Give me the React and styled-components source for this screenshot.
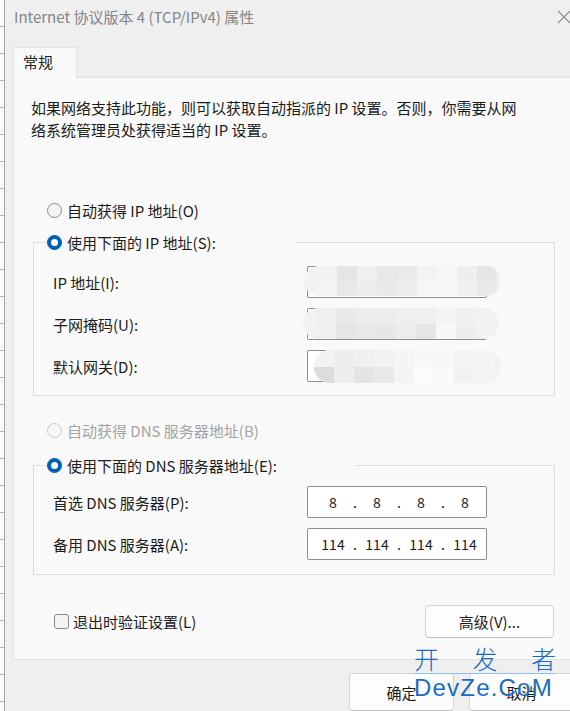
import React from "react";
import styled, { createGlobalStyle } from "styled-components";

const GlobalStyle = createGlobalStyle`
  html, body {
    margin: 0;
    padding: 0;
    background: #efefef;
  }
  body {
    font-family: "Noto Sans CJK SC", "Noto Sans", sans-serif;
    color: #1b1b1b;
  }
`;

const Screen = styled.div`
  position: relative;
  width: 570px;
  height: 711px;
  overflow: hidden;
  display: flex;
  background: #efefef;
`;

const BackWindow = styled.div`
  width: 4px;
  flex-shrink: 0;
  background: repeating-linear-gradient(
    to bottom,
    #fafafa 0 26px,
    #b8b8b8 26px 27px
  );
`;

const Dialog = styled.div`
  width: 582px;
  flex-shrink: 0;
  display: flex;
  flex-direction: column;
  border-left: 1px solid #a7a7a7;
  background: #efefef;
`;

const TitleBar = styled.div`
  height: 47px;
  display: flex;
  align-items: flex-start;
  padding-left: 9px;
`;

const Title = styled.div`
  margin-top: 8px;
  font-size: 15px;
  line-height: 18px;
  color: #858585;
`;

const CloseButton = styled.div`
  margin-left: auto;
  width: 46px;
  height: 34px;
  display: flex;
  align-items: center;
  justify-content: center;
`;

const Body = styled.div`
  padding: 0 11px 0 8px;
`;

const TabStrip = styled.div`
  display: flex;
`;

const Tab = styled.div`
  position: relative;
  z-index: 1;
  width: 64px;
  height: 31px;
  box-sizing: border-box;
  margin-bottom: -1px;
  padding-left: 9px;
  border: 1px solid #e2e2e2;
  border-bottom: none;
  background: #f9f9f9;
  font-size: 15px;
  line-height: 28px;
`;

const Panel = styled.div`
  display: flex;
  flex-direction: column;
  padding-bottom: 21px;
  border: 1px solid #e2e2e2;
  background: #f9f9f9;
`;

const Intro = styled.p`
  margin: 19px 0 0 17px;
  font-size: 15px;
  line-height: 22px;
`;

const RadioRow = styled.label`
  display: flex;
  align-items: center;
  height: 20px;
  margin: ${({ $mt }) => $mt}px 0 0 33px;
  font-size: 15px;
  color: ${({ disabled }) => (disabled ? "#a3a3a3" : "#1b1b1b")};
  white-space: nowrap;
`;

const RadioDot = styled.span`
  position: relative;
  width: 15px;
  height: 15px;
  box-sizing: border-box;
  margin-right: 5px;
  border-radius: 50%;
  flex-shrink: 0;
  border: 1px solid
    ${({ $checked, $disabled }) =>
      $checked ? "#005fb8" : $disabled ? "#c9c9c9" : "#8a8a8a"};
  background: ${({ $checked, $disabled }) =>
    $checked ? "#005fb8" : $disabled ? "#f7f7f7" : "#f4f4f4"};

  &::after {
    content: "";
    display: ${({ $checked }) => ($checked ? "block" : "none")};
    position: absolute;
    left: 50%;
    top: 50%;
    width: 7px;
    height: 7px;
    margin: -3.5px 0 0 -3.5px;
    border-radius: 50%;
    background: #fff;
  }
`;

const GroupBox = styled.fieldset`
  margin: ${({ $mt }) => $mt}px 20px 0 19px;
  padding: ${({ $pt }) => $pt}px 0 ${({ $pb }) => $pb}px 19px;
  border: 1px solid #dddddd;
  min-width: 0;
`;

const Legend = styled.legend`
  width: ${({ $w }) => $w}px;
  margin-left: -6px;
  padding: 0;
  background: #f9f9f9;
`;

const LegendRadio = styled(RadioRow)`
  margin: 0;
`;

const FieldGrid = styled.div`
  display: grid;
  grid-template-columns: 254px 180px;
  row-gap: 10px;
  align-items: center;
`;

const FieldLabel = styled.span`
  font-size: 15px;
`;

const TextBox = styled.div`
  position: relative;
  height: 32px;
  box-sizing: border-box;
  padding-left: 7px;
  display: flex;
  align-items: center;
  border: 1px solid #8d8d8d;
  border-radius: 2px;
  background: #fff;
  font-size: 14px;
`;

const Segment = styled.span`
  width: 36px;
  text-align: center;
`;

const Dot = styled.span`
  width: 8px;
  text-align: center;
`;

const Mosaic = styled.div`
  position: absolute;
  left: ${({ $x }) => $x}px;
  top: -1px;
  width: ${({ $w }) => $w}px;
  height: ${({ $h }) => $h}px;
  box-sizing: border-box;
  padding-left: ${({ $pad }) => $pad}px;
  display: grid;
  grid-template-columns: repeat(9, 20px);
  grid-template-rows: 1fr 1fr;
  border-radius: 16px;
  background: #f2f2f2;
  overflow: hidden;
`;

const Cell = styled.span`
  background: ${({ $c }) => $c};
`;

const BottomRow = styled.div`
  display: flex;
  align-items: center;
  justify-content: space-between;
  margin: 30px 21px 0 40px;
`;

const CheckRow = styled.label`
  display: flex;
  align-items: center;
  font-size: 15px;
`;

const CheckBox = styled.span`
  width: 15px;
  height: 15px;
  box-sizing: border-box;
  margin-right: 4px;
  border: 1px solid #8a8a8a;
  border-radius: 3px;
  background: #f4f4f4;
`;

const Button = styled.button`
  width: ${({ $w }) => $w}px;
  height: ${({ $h }) => $h}px;
  padding: 0;
  border: 1px solid #d4d4d4;
  border-bottom-color: #c2c2c2;
  border-radius: 4px;
  background: #fdfdfd;
  font-family: inherit;
  font-size: 15px;
  color: #1b1b1b;
`;

const Footer = styled.div`
  display: flex;
  justify-content: flex-end;
  gap: 15px;
  padding: 13px 2px 0 0;
`;

const Watermark = styled.div`
  position: absolute;
  left: 414px;
  top: 643px;
  width: 142px;
  display: flex;
  flex-direction: column;
  color: #1a6cc2;
  font-family: "Liberation Sans", "Noto Sans CJK SC", sans-serif;
`;

const WmTop = styled.div`
  display: flex;
  justify-content: space-between;
  font-family: "Noto Sans CJK SC", sans-serif;
  font-size: 25px;
  font-weight: 300;
  line-height: 30px;
  border-bottom: 1px solid #8cc3ee;
`;

const WmBottom = styled.div`
  font-size: 24px;
  line-height: 28px;
  letter-spacing: 1.2px;
`;

const blobs = [
  {
    x: -4, w: 197, h: 30, pad: 13,
    cells: [
      "#f2f2f2", "#e5e5e5", "#efefef", "#e8e8e8", "#eaeaea", "#f3f3f3", "#f6f6f6", "#eeeeee", "#e6e6e6",
      "#f3f3f3", "#e8e8e8", "#ededed", "#e9e9e9", "#ececec", "#f6f6f6", "#f7f7f7", "#f0f0f0", "#e9e9e9",
    ],
  },
  {
    x: -5, w: 196, h: 31, pad: 13,
    cells: [
      "#efefef", "#e9e9e9", "#ededed", "#ececec", "#efefef", "#efefef", "#f4f4f4", "#f0f0f0", "#f2f2f2",
      "#f0f0f0", "#e5e5e5", "#e9e9e9", "#e7e7e7", "#ededed", "#e6e6e6", "#f7f7f7", "#eeeeee", "#f2f2f2",
    ],
  },
  {
    x: 6, w: 187, h: 33, pad: 0,
    cells: [
      "#f3f3f3", "#eeeeee", "#f0f0f0", "#f2f2f2", "#f5f5f5", "#f7f7f7", "#f7f7f7", "#f3f3f3", "#f4f4f4",
      "#dcdcdc", "#eeeeee", "#e4e4e4", "#e8e8e8", "#f4f4f4", "#fbfbfb", "#fafafa", "#f2f2f2", "#f3f3f3",
    ],
  },
];

const BlurredBox = ({ blob }) => (
  <TextBox>
    <Mosaic $x={blob.x} $w={blob.w} $h={blob.h} $pad={blob.pad}>
      {blob.cells.map((c, i) => (
        <Cell key={i} $c={c} />
      ))}
    </Mosaic>
  </TextBox>
);

const IpBox = ({ parts }) => (
  <TextBox>
    {parts.map((p, i) => (
      <React.Fragment key={i}>
        {i > 0 && <Dot>.</Dot>}
        <Segment>{p}</Segment>
      </React.Fragment>
    ))}
  </TextBox>
);

const Radio = ({ checked, disabled }) => (
  <RadioDot $checked={checked} $disabled={disabled} />
);

export default function App() {
  return (
    <Screen>
      <GlobalStyle />
      <BackWindow />
      <Dialog>
        <TitleBar>
          <Title>Internet 协议版本 4 (TCP/IPv4) 属性</Title>
          <CloseButton>
            <svg width="14" height="14" viewBox="0 0 14 14">
              <path d="M1 1 L13 13 M13 1 L1 13" stroke="#8a8a8a" strokeWidth="1.1" fill="none" />
            </svg>
          </CloseButton>
        </TitleBar>
        <Body>
          <TabStrip>
            <Tab>常规</Tab>
          </TabStrip>
          <Panel>
            <Intro>
              如果网络支持此功能，则可以获取自动指派的 IP 设置。否则，你需要从网
              <br />
              络系统管理员处获得适当的 IP 设置。
            </Intro>

            <RadioRow $mt={59}>
              <Radio />
              自动获得 IP 地址(O)
            </RadioRow>

            <GroupBox $mt={12} $pt={14} $pb={13}>
              <Legend $w={249}>
                <LegendRadio>
                  <Radio checked />
                  使用下面的 IP 地址(S):
                </LegendRadio>
              </Legend>
              <FieldGrid>
                <FieldLabel>IP 地址(I):</FieldLabel>
                <BlurredBox blob={blobs[0]} />
                <FieldLabel>子网掩码(U):</FieldLabel>
                <BlurredBox blob={blobs[1]} />
                <FieldLabel>默认网关(D):</FieldLabel>
                <BlurredBox blob={blobs[2]} />
              </FieldGrid>
            </GroupBox>

            <RadioRow $mt={24} disabled>
              <Radio disabled />
              自动获得 DNS 服务器地址(B)
            </RadioRow>

            <GroupBox $mt={15} $pt={11} $pb={14}>
              <Legend $w={309}>
                <LegendRadio>
                  <Radio checked />
                  使用下面的 DNS 服务器地址(E):
                </LegendRadio>
              </Legend>
              <FieldGrid>
                <FieldLabel>首选 DNS 服务器(P):</FieldLabel>
                <IpBox parts={["8", "8", "8", "8"]} />
                <FieldLabel>备用 DNS 服务器(A):</FieldLabel>
                <IpBox parts={["114", "114", "114", "114"]} />
              </FieldGrid>
            </GroupBox>

            <BottomRow>
              <CheckRow>
                <CheckBox />
                退出时验证设置(L)
              </CheckRow>
              <Button $w={129} $h={33}>高级(V)...</Button>
            </BottomRow>
          </Panel>
          <Footer>
            <Button $w={105} $h={38}>确定</Button>
            <Button $w={105} $h={38}>取消</Button>
          </Footer>
        </Body>
      </Dialog>
      <Watermark>
        <WmTop>
          <span>开</span>
          <span>发</span>
          <span>者</span>
        </WmTop>
        <WmBottom>DevZe.CoM</WmBottom>
      </Watermark>
    </Screen>
  );
}
